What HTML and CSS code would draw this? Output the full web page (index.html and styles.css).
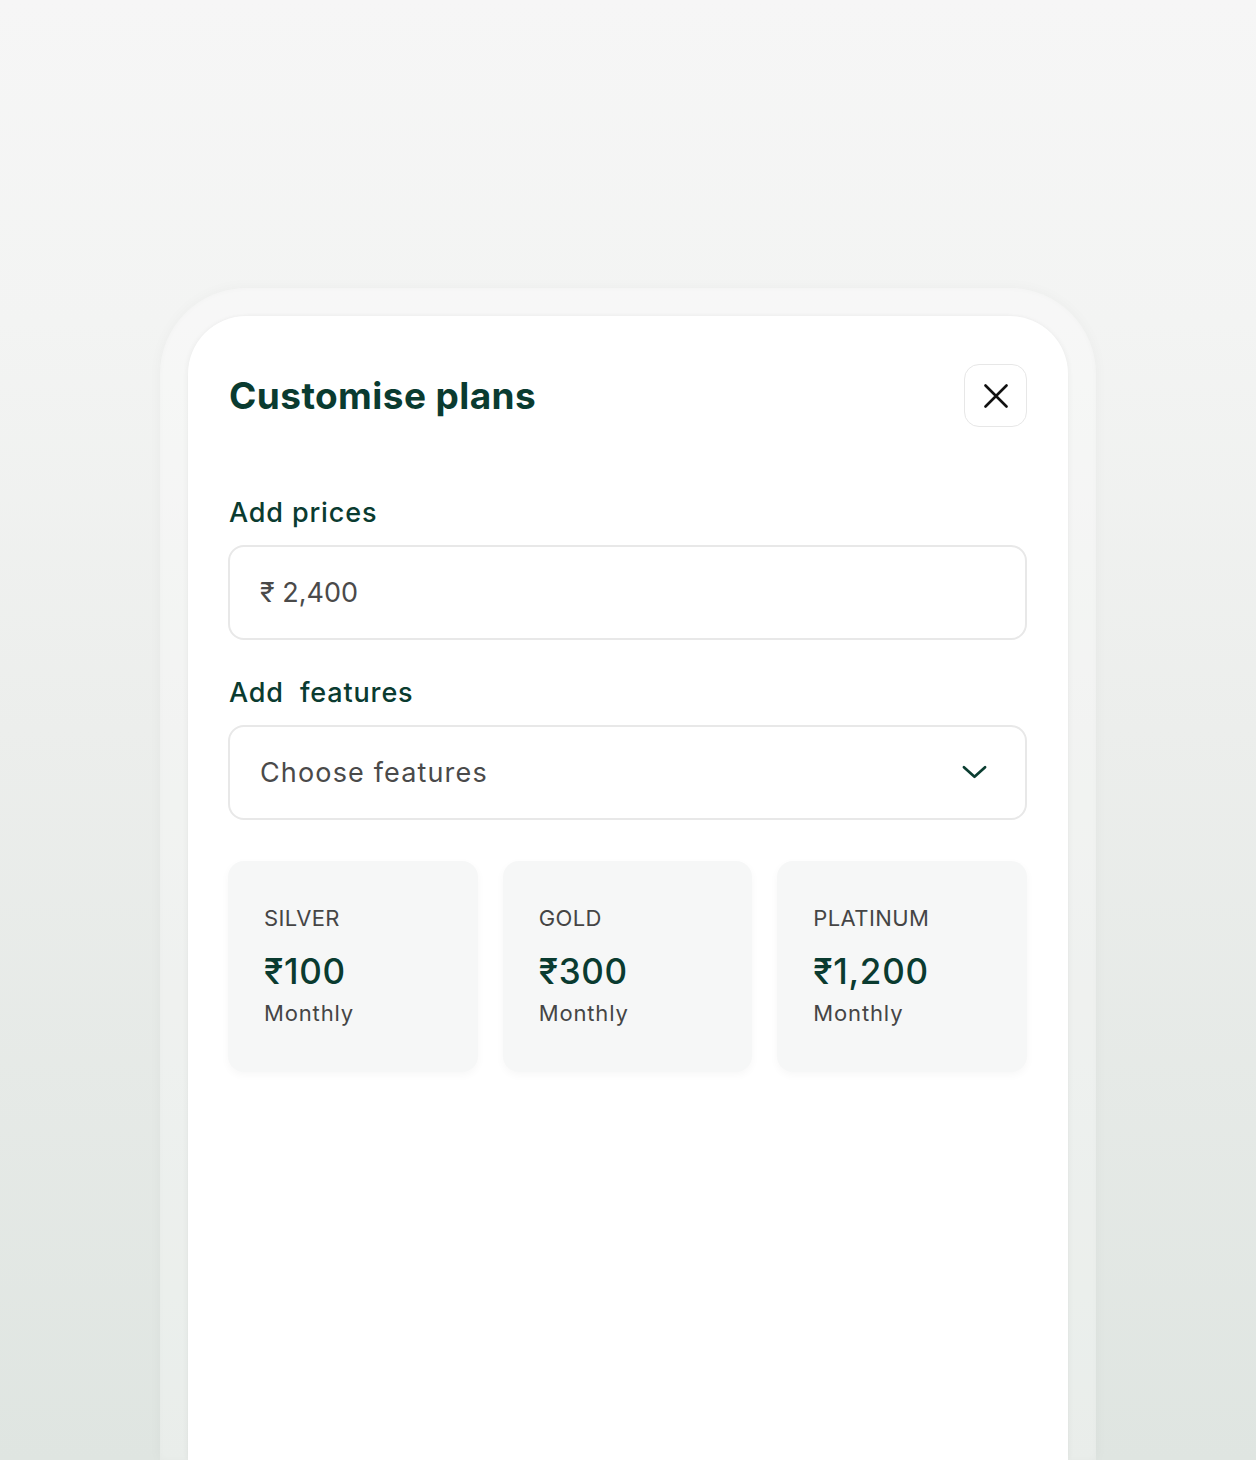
FILE: index.html
```html
<!DOCTYPE html>
<html lang="en">
<head>
<meta charset="utf-8">
<title>Customise plans</title>
<link rel="stylesheet" href="styles.css">
</head>
<body>
<div class="stage">
  <div class="phone">
    <div class="screen">
      <div class="header">
        <h1 class="title">Customise plans</h1>
        <button class="close" aria-label="Close">
          <svg width="24" height="24" viewBox="0 0 24 24" fill="none" stroke="#111" stroke-width="2.6" stroke-linecap="round"><path d="M1.5 1.5 L22.5 22.5 M22.5 1.5 L1.5 22.5"/></svg>
        </button>
      </div>

      <div class="field">
        <div class="label">Add prices</div>
        <div class="input"><span class="value">₹ 2,400</span></div>
      </div>

      <div class="field">
        <div class="label">Add&nbsp; features</div>
        <div class="input select">
          <span class="value wide">Choose features</span>
          <svg class="chev" width="26" height="16" viewBox="0 0 26 16" fill="none" stroke="#0b3d31" stroke-width="2.8" stroke-linecap="round" stroke-linejoin="round"><path d="M2 3 L13 13 L24 3"/></svg>
        </div>
      </div>

      <div class="plans">
        <div class="plan">
          <div class="plan-name">SILVER</div>
          <div class="plan-price">₹100</div>
          <div class="plan-period">Monthly</div>
        </div>
        <div class="plan">
          <div class="plan-name">GOLD</div>
          <div class="plan-price">₹300</div>
          <div class="plan-period">Monthly</div>
        </div>
        <div class="plan">
          <div class="plan-name">PLATINUM</div>
          <div class="plan-price">₹1,200</div>
          <div class="plan-period">Monthly</div>
        </div>
      </div>
    </div>
  </div>
</div>
</body>
</html>
```

FILE: styles.css
```css
* { box-sizing: border-box; }
html, body { margin: 0; padding: 0; }
body {
  width: 1256px;
  height: 1460px;
  overflow: hidden;
  background: linear-gradient(180deg, #f6f6f6 0%, #f3f4f3 22%, #eceeec 50%, #dfe5e1 100%);
  font-family: "Inter", "Noto Sans", sans-serif;
}
.stage {
  display: flex;
  justify-content: center;
  padding-top: 288px;
  height: 1460px;
}
.phone {
  width: 936px;
  height: 1172px;
  padding: 28px 28px 0 28px;
  border-radius: 86px 86px 0 0;
  background: rgba(255,255,255,0.32);
  box-shadow: 0 0 14px rgba(0,0,0,0.035), inset 0 0 6px rgba(0,0,0,0.025);
}
.screen {
  height: 100%;
  background: #ffffff;
  border-radius: 58px 58px 0 0;
  padding: 48px 41px 0 40px;
  box-shadow: -2px 0 4px rgba(0,0,0,0.03), 2px 0 4px rgba(0,0,0,0.03);
}
.header {
  display: flex;
  align-items: center;
  justify-content: space-between;
  height: 63px;
}
.title {
  margin: 0 0 0 1px;
  font-size: 37px;
  font-weight: 700;
  color: #0a3b30;
  letter-spacing: 0.42px;
}
.close {
  width: 63px;
  height: 63px;
  border: 1.5px solid #e7e7e7;
  border-radius: 15px;
  background: #fff;
  display: flex;
  align-items: center;
  justify-content: center;
  padding: 0;
}
.field { margin-top: 68px; }
.field + .field { margin-top: 35px; }
.label {
  font-size: 27px;
  font-weight: 500;
  color: #0a3b30;
  line-height: 36px;
  margin-bottom: 14px;
  margin-left: 1px;
  letter-spacing: 0.85px;
}
.input {
  height: 95px;
  border: 2px solid #e8e8e8;
  border-radius: 16px;
  display: flex;
  align-items: center;
  padding: 0 38px 0 30px;
}
.value {
  font-size: 27px;
  color: #4a4a4a;
  font-weight: 400;
}
.wide { letter-spacing: 1.15px; }
.select { justify-content: space-between; }
.chev { margin-top: -1px; width: 25px; }
.plans {
  display: grid;
  grid-template-columns: repeat(3, 1fr);
  gap: 25px;
  margin-top: 41px;
}
.plan {
  height: 211px;
  background: #f6f7f7;
  border-radius: 16px;
  padding: 39px 36px 0 36px;
  box-shadow: 0 3px 8px rgba(0,0,0,0.035);
}
.plan-name {
  font-size: 22px;
  color: #454545;
  line-height: 36px;
  letter-spacing: 0.4px;
}
.plan-price {
  font-size: 35px;
  font-weight: 500;
  color: #0a3b30;
  line-height: 50px;
  margin-top: 10px;
  letter-spacing: 0.7px;
}
.plan-period {
  font-size: 22px;
  color: #454545;
  line-height: 36px;
  margin-top: -1px;
  letter-spacing: 0.85px;
}
```
